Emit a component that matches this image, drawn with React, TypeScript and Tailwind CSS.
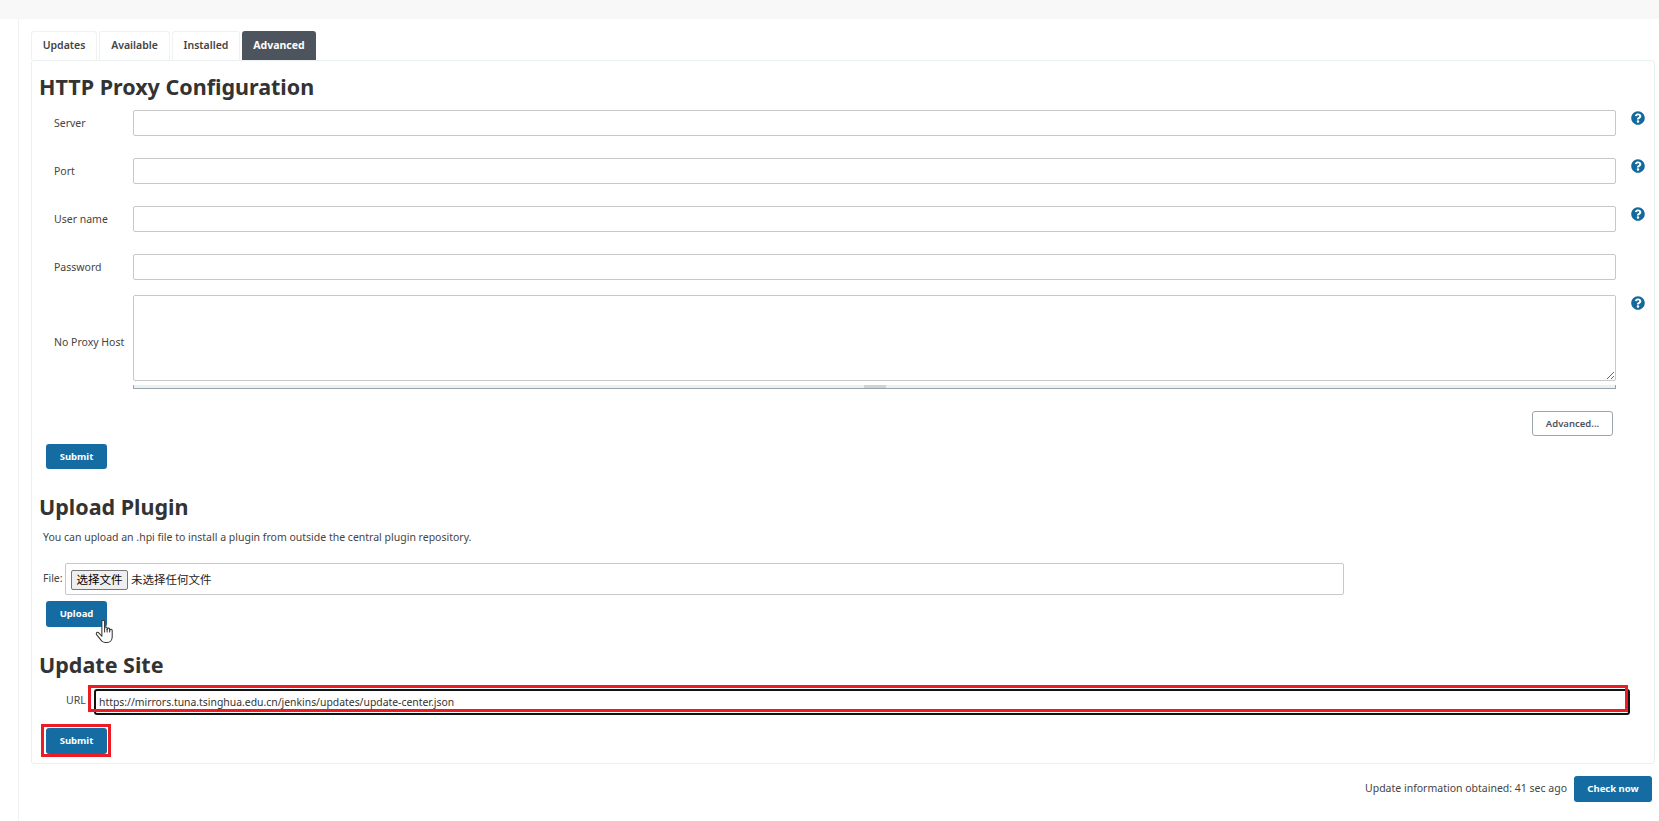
import { FaQuestionCircle } from "react-icons/fa";

const font = { fontFamily: '"Noto Sans", "Noto Sans CJK SC", sans-serif' };

function Help() {
  return (
    <span className="w-[38px] shrink-0 pl-[15px] pt-[1px]">
      <FaQuestionCircle className="w-[14px] h-[14px] text-[#14689c]" />
    </span>
  );
}

function Row({ label, help = true }: { label: string; help?: boolean }) {
  return (
    <div className="flex items-start">
      <label className="w-[94px] pl-[15px] shrink-0 h-[26px] leading-[26px] text-[10.5px] text-[#444]">{label}</label>
      <input className="flex-1 h-[26px] border border-[#c8c8c8] rounded-[2px] bg-white outline-none" />
      {help ? <Help /> : <span className="w-[38px] shrink-0" />}
    </div>
  );
}

function BlueButton({ text, className = "" }: { text: string; className?: string }) {
  return (
    <button className={`rounded-[3px] bg-[#146ca2] pt-[1px] text-white text-[9.5px] font-bold ${className}`}>{text}</button>
  );
}

function Heading({ text }: { text: string }) {
  return <h2 className="text-[21.5px] leading-[32px] font-bold text-[#333]">{text}</h2>;
}

function HandCursor() {
  return (
    <svg viewBox="0 0 18 23" className="absolute left-[49px] top-[18px] w-[19px] h-[25px]" fill="#fff" stroke="#333" strokeWidth="1" strokeLinejoin="round" strokeLinecap="round">
      <path d="M6.5 13V2.2a1.3 1.3 0 0 1 2.6 0V8.5a1.2 1.2 0 0 1 2.4 0V9.5a1.2 1.2 0 0 1 2.4 0V10.5a1.2 1.2 0 0 1 2.4 0V16.5c0 3.2-2 5.5-5 5.5H9.5c-2 0-3-1-4-2.5L1.5 14.5c-.7-1-.1-2.2.8-2.2.6 0 1.2.4 1.7 1l2.5 2.7Z" />
      <path d="M9.1 8.5V12M11.5 9.5V12M13.9 10.5V12" fill="none" />
    </svg>
  );
}

export default function App() {
  return (
    <div className="h-[821px] overflow-hidden bg-white" style={font}>
      <div className="h-[19px] bg-[#f8f8f8]" />
      <div className="flex h-[802px]">
        <div className="w-[19px] shrink-0 border-r border-[#eef2f2]" />
        <div className="w-[1636px] ml-[12px] pt-[12px]">
          {/* tabs */}
          <div className="flex gap-[2px] h-[29px] text-[10.5px] font-semibold text-[#444]">
            <div className="w-[66px] flex items-center justify-center border border-b-0 border-[#eef2f2] rounded-t-[3px]">Updates</div>
            <div className="w-[71px] flex items-center justify-center border border-b-0 border-[#eef2f2] rounded-t-[3px]">Available</div>
            <div className="w-[68px] flex items-center justify-center border border-b-0 border-[#eef2f2] rounded-t-[3px]">Installed</div>
            <div className="w-[74px] flex items-center justify-center rounded-t-[3px] bg-[#4d545d] text-white font-bold">Advanced</div>
          </div>

          <div className="w-[1624px] h-[704px] border border-[#eaf0f0] rounded-[3px] pl-[7px] pt-[10px]">
            <Heading text="HTTP Proxy Configuration" />
            <div className="mt-[7px] flex flex-col gap-[22px]">
              <Row label="Server" />
              <Row label="Port" />
              <Row label="User name" />
              <Row label="Password" help={false} />
            </div>
            <div className="flex items-start mt-[15px]">
              <label className="w-[94px] pl-[15px] shrink-0 h-[86px] leading-[94px] text-[10.5px] text-[#444] whitespace-nowrap">No Proxy Host</label>
              <textarea className="flex-1 h-[86px] block border border-[#c8c8c8] rounded-[2px] bg-white outline-none resize-y" />
              <Help />
            </div>
            <div className="ml-[94px] mr-[38px] mt-[4px] h-[4px] bg-[#edf1f2] border-b border-[#94a5ad] border-x flex justify-center">
              <div className="w-[22px] h-[3px] bg-[#cfd3d4]" />
            </div>
            <div className="mt-[22px] pr-[41px] flex justify-end">
              <button className="w-[81px] h-[25px] pt-[1px] rounded-[3px] border border-[#9aa5ad] bg-white text-[9.5px] font-semibold text-[#4d545d]">Advanced...</button>
            </div>
            <BlueButton text="Submit" className="block w-[61px] ml-[7px] mt-[8px] h-[25px]" />

            <div className="mt-[22px]">
              <Heading text="Upload Plugin" />
            </div>
            <p className="mt-[5px] ml-[4px] h-[18px] leading-[18px] text-[10.5px] text-[#444]">You can upload an .hpi file to install a plugin from outside the central plugin repository.</p>
            <div className="mt-[17px] flex items-center ml-[4px]">
              <span className="w-[22px] text-[10.5px] text-[#444]">File:</span>
              <div className="w-[1279px] h-[32px] border border-[#c8c8c8] rounded-[2px] flex items-center pl-[5px] pt-[1px] gap-[3px] text-[11.5px] text-[#222]">
                <button className="w-[57px] h-[20px] bg-[#efefef] border border-[#767676] rounded-[2px] text-[11.5px] leading-none text-black">选择文件</button>
                <span>未选择任何文件</span>
              </div>
            </div>
            <div className="relative w-[61px] ml-[7px] mt-[6px] h-[26px]">
              <BlueButton text="Upload" className="block w-[61px] h-[26px]" />
              <HandCursor />
            </div>

            <div className="mt-[22px]">
              <Heading text="Update Site" />
            </div>
            <div className="mt-[7px] flex items-center">
              <label className="ml-[27px] w-[28px] text-[10.5px] text-[#444]">URL</label>
              <div className="relative w-[1536px] h-[26px]">
                <input
                  readOnly
                  value="https://mirrors.tuna.tsinghua.edu.cn/jenkins/updates/update-center.json"
                  className="w-full h-full border-2 border-[#111] rounded-[3px] pl-[3px] text-[10.4px] text-[#333] bg-white outline-none"
                />
                <div className="absolute left-[-6px] top-[-3px] right-[2px] bottom-[2px] border-[3px] border-[#ed1c24] pointer-events-none" />
              </div>
            </div>
            <div className="relative w-[61px] ml-[7px] mt-[14px] h-[26px]">
              <BlueButton text="Submit" className="block w-[61px] h-[26px]" />
              <div className="absolute left-[-5px] right-[-4px] top-[-4px] bottom-[-3px] border-[3px] border-[#ed1c24] pointer-events-none" />
            </div>
          </div>

          <div className="w-[1621px] mt-[12px] flex items-center justify-end gap-[7px]">
            <span className="text-[10.5px] text-[#444]">Update information obtained: 41 sec ago</span>
            <BlueButton text="Check now" className="w-[78px] h-[26px]" />
          </div>
        </div>
      </div>
    </div>
  );
}
